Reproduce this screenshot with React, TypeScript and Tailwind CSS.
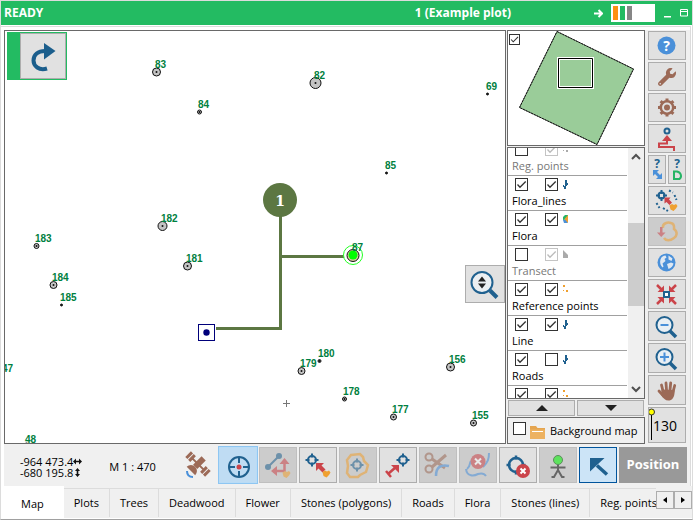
import React, { useState } from 'react';
import { FaWrench } from 'react-icons/fa';
import clsx from 'clsx';

const BLUE = '#20618f';
const SKY = '#4a90d9';
const RED = '#cb444a';
const ORANGE = '#efa030';
const BROWN = '#9c6a57';

type Plant = { id: string; x: number; y: number; r: number };

// Positions in map pixels
const plants: Plant[] = [
  { id: '83', x: 151, y: 41, r: 4 },
  { id: '84', x: 194, y: 81, r: 2 },
  { id: '82', x: 310, y: 52, r: 5.5 },
  { id: '69', x: 482, y: 63, r: 1 },
  { id: '85', x: 381, y: 142, r: 1 },
  { id: '182', x: 157, y: 195, r: 4.5 },
  { id: '181', x: 182, y: 235, r: 4 },
  { id: '183', x: 31, y: 215, r: 2.5 },
  { id: '184', x: 48, y: 254, r: 3.5 },
  { id: '185', x: 56, y: 274, r: 1 },
  { id: '180', x: 314, y: 330, r: 1.5 },
  { id: '179', x: 296, y: 340, r: 3.5 },
  { id: '178', x: 339, y: 368, r: 2 },
  { id: '177', x: 388, y: 386, r: 3 },
  { id: '156', x: 445, y: 336, r: 4 },
  { id: '155', x: 468, y: 392, r: 3 },
  { id: '48', x: 21, y: 416, r: 4 },
];

type Layer = { name: string; on: boolean; edit: boolean; kind: 'points' | 'line' | 'area' | 'transect'; muted?: boolean };

const initialLayers: Layer[] = [
  { name: 'Reg. points', on: false, edit: true, kind: 'points', muted: true },
  { name: 'Flora_lines', on: true, edit: true, kind: 'line' },
  { name: 'Flora', on: true, edit: true, kind: 'area' },
  { name: 'Transect', on: false, edit: true, kind: 'transect', muted: true },
  { name: 'Reference points', on: true, edit: true, kind: 'points' },
  { name: 'Line', on: true, edit: true, kind: 'line' },
  { name: 'Roads', on: true, edit: false, kind: 'line' },
  { name: 'Stones', on: true, edit: true, kind: 'points' },
];

const tabs = ['Map', 'Plots', 'Trees', 'Deadwood', 'Flower', 'Stones (polygons)', 'Roads', 'Flora', 'Stones (lines)', 'Reg. points'];

type CheckProps = { label: string; checked: boolean; onChange: () => void; muted?: boolean; small?: boolean };

const Check: React.FC<CheckProps> = ({ label, checked, onChange, muted, small }) => (
  <span className={clsx('relative block shrink-0', small ? 'size-[11px]' : 'size-[13px]')}>
    <input
      type="checkbox"
      aria-label={label}
      checked={checked}
      onChange={onChange}
      className={clsx('block size-full appearance-none border bg-white', muted && checked ? 'border-[#c4c4c4]' : 'border-[#333]')}
    />
    {checked && (
      <svg viewBox="0 0 13 13" className="pointer-events-none absolute inset-0 size-full" fill="none">
        <path d="M2.5 6.5 5 9.2 10.7 3.5" stroke={muted ? '#bbb' : '#333'} strokeWidth="1.3" />
      </svg>
    )}
  </span>
);

const Target = ({ x, y, r = 4.5, w = 2 }: { x: number; y: number; r?: number; w?: number }) => (
  <g stroke={BLUE} strokeWidth={w} fill="none">
    <circle cx={x} cy={y} r={r} />
    <path d={`M${x} ${y - r - 2.5}v4M${x} ${y + r - 1.5}v4M${x - r - 2.5} ${y}h4M${x + r - 1.5} ${y}h4`} />
  </g>
);

const Blob = ({ x, y }: { x: number; y: number }) => (
  <path d={`M${x - 3.5} ${y - 2}l2.5-1.5 2 1 2-1 1.5 2-1.5 2.5-2.5 2.5-3-1.5z`} fill={ORANGE} />
);

const LayerIcon = ({ kind, muted }: { kind: Layer['kind']; muted?: boolean }) => (
  <svg width="8" height="12" viewBox="0 0 8 12">
    {kind === 'points' && <path d="M1 2h2v2h-2zM4 7h2v2h-2zM1 7h1v1h-1z" fill={muted ? '#aaa' : ORANGE} />}
    {kind === 'line' && <path d="M3 2h2v3h1v2h-1v1h-1v3h-2v-2h-1v-2h1v1h1z" fill={BLUE} />}
    {kind === 'area' && (
      <>
        <path d="M1 4 3 2h3v4l-5 1z" fill="#25b465" />
        <path d="M1 7l3-1 2 4h-4z" fill={SKY} />
        <path d="M6 2v8L2.500 6z" fill={ORANGE} />
      </>
    )}
    {kind === 'transect' && <path d="M1 2 6 7v3h-5z" fill="#aaa" />}
  </svg>
);

type ToolProps = {
  label: string;
  children: React.ReactNode;
  disabled?: boolean;
  className?: string;
};

const Tool: React.FC<ToolProps> = ({ label, children, disabled, className = 'border-[#adadad] bg-[#e1e1e1]' }) => (
  <button
    type="button"
    aria-label={label}
    disabled={disabled}
    className={clsx('flex h-9 w-[38px] shrink-0 items-center justify-center border', disabled ? 'border-[#bfbfbf] bg-[#ccc]' : className)}
  >
    <svg width="36" height="34" viewBox="1 1 36 34" fill="none" className={clsx('shrink-0', disabled && 'opacity-55')}>
      {children}
    </svg>
  </button>
);

const SideTool: React.FC<{ label: string; children: React.ReactNode; disabled?: boolean; className?: string }> = ({
  label,
  children,
  disabled,
  className = 'h-[29px] w-full shrink-0',
}) => (
  <button
    type="button"
    aria-label={label}
    disabled={disabled}
    className={clsx(
      'flex items-center justify-center border',
      disabled ? 'border-[#bfbfbf] bg-[#ccc]' : 'border-[#adadad] bg-[#e1e1e1]',
      className
    )}
  >
    {children}
  </button>
);

const Drawing: React.FC<{ children: React.ReactNode; faded?: boolean }> = ({ children, faded }) => (
  <svg width="36" height="27" viewBox="1 1 36 27" fill="none" className={clsx('shrink-0', faded && 'opacity-55')}>
    {children}
  </svg>
);

const Magnifier = ({ sign }: { sign: string }) => (
  <Drawing>
    <circle cx="16.500" cy="13" r="8" stroke={BLUE} strokeWidth="2" fill="#e9eff4" />
    <path d="M22 19l6 6" stroke={BLUE} strokeWidth="3.500" />
    <path d={sign} stroke={SKY} strokeWidth="2" />
  </Drawing>
);

const TitleBar = () => (
  <header className="flex h-6 shrink-0 items-center bg-[#23bb62] pr-1 pl-[3px] text-xs font-bold text-white">
    <span>READY</span>
    <h1 className="mr-[83px] ml-auto">1 (Example plot)</h1>
    <svg width="9" height="9" viewBox="0 0 9 9" fill="none" stroke="#fff" strokeWidth="2">
      <path d="M0 4.500h8M4.500 1l3.500 3.500L4.500 8" />
    </svg>
    <div className="ml-2 flex h-[18px] w-11 gap-0.5 bg-white p-0.5">
      <span className="w-[5px] bg-[#ff9012]" />
      <span className="w-[5px] bg-[#23bb62]" />
      <span className="w-[5px] bg-[#868686]" />
    </div>
    <button type="button" aria-label="Minimize" className="ml-[9px]">
      <svg width="7" height="9" viewBox="0 0 7 9">
        <path d="M0 7h7v1.500H0z" fill="#fff" />
      </svg>
    </button>
    <button type="button" aria-label="Maximize" className="ml-[9px]">
      <svg width="8" height="8" viewBox="0 0 8 8" fill="none" stroke="#fff">
        <path d="M.5.5h7v6.500h-7zM0 2.500h8" />
      </svg>
    </button>
  </header>
);

const PlotMap = () => (
  <section className="relative min-w-0 flex-1 overflow-hidden border border-[#696969] bg-white">
    <svg className="absolute inset-0 size-full" role="img" aria-label="Plot map">
      {plants.map((p) => (
        <g key={p.id}>
          <circle cx={p.x + 0.5} cy={p.y} r={p.r} fill="#c4c4c4" stroke="#111" />
          <circle cx={p.x + 0.5} cy={p.y} r="1" fill="#111" />
        </g>
      ))}
      <path d="M275.500 180V297.500H211M275.500 225.500H341" fill="none" stroke="#5c7742" strokeWidth="3" />
      <circle cx="275" cy="169" r="17" fill="#5c7742" />
      <text x="275" y="175" textAnchor="middle" fill="#fff" className="font-['DejaVu_Serif',serif] text-sm font-bold">1</text>
      <rect x="193.500" y="293.500" width="16" height="16" fill="#fff" stroke="#00007a" />
      <circle cx="201.500" cy="301.500" r="3.200" fill="#00007a" />
      <circle cx="348" cy="224" r="9.500" fill="#fff" stroke="#2f2" />
      <circle cx="348" cy="224.500" r="6" fill="#d5cf9c" stroke="#111" />
      <circle cx="348" cy="224" r="4.500" fill="#0f0" />
      <g fill="#008040" className="font-['Liberation_Sans',sans-serif] text-[10px] font-bold">
        {plants.map((p) => (
          <text key={p.id} x={p.x - 1} y={p.y - 4}>{p.id}</text>
        ))}
        <text x="347" y="220">87</text>
        <text x="-3" y="341">47</text>
      </g>
      <path d="M278 372.500h7M281.500 369v7" stroke="#777" />
    </svg>
    <div className="absolute top-px left-0.5 flex bg-[#23bb62] p-px pl-[13px]">
      <button type="button" aria-label="Redo" className="size-[46px] border border-[#adadad] bg-[#e1e1e1]">
        <svg width="44" height="44" viewBox="0 0 44 44" fill="none">
          <path d="M26 34.500C18 37 12.500 32 12.500 26.500C12.500 20.500 17 17 24 17" stroke="#1b5e8c" strokeWidth="4" />
          <path d="M23 9l11.500 8L23 25.500z" fill="#1b5e8c" />
        </svg>
      </button>
    </div>
    <button
      type="button"
      aria-label="Zoom level"
      className="absolute top-[234px] right-0 h-[38px] w-10 border border-[#adadad] bg-[#e1e1e1]"
    >
      <svg width="38" height="36" viewBox="0 0 38 36" fill="none">
        <circle cx="16" cy="16.500" r="10.500" stroke={BLUE} strokeWidth="2" fill="#ebeff2" />
        <path d="M24 24.500l7 7" stroke={BLUE} strokeWidth="4" />
        <path d="M16 10.500l4 5h-8zM12 17.500h8l-4 5z" fill="#222" />
      </svg>
    </button>
  </section>
);

const LayerPanel = () => {
  const [layers, setLayers] = useState(initialLayers);
  const [overview, setOverview] = useState(true);
  const [background, setBackground] = useState(false);

  const toggle = (index: number, key: 'on' | 'edit') => {
    setLayers((prev) => prev.map((l, i) => (i === index ? { ...l, [key]: !l[key] } : l)));
  };

  return (
    <aside className="ml-px flex w-[138px] shrink-0 flex-col">
      <div className="relative h-[116px] shrink-0 border border-[#696969] bg-white">
        <svg width="136" height="114" viewBox="0 0 136 114">
          <path d="M49 .5l76.500 37.500L89 113.500 11.500 76.500z" fill="#9acc99" stroke="#111" strokeDasharray="2 1" />
          <path d="M49 .5l76.500 37.500L89 113.500 11.500 76.500z" fill="none" stroke="#111" strokeWidth=".6" />
          <path d="M50.500 27.500h34v29h-34z" fill="none" stroke="#fff" strokeWidth="3" />
          <path d="M50.500 27.500h34v29h-34z" fill="none" stroke="#000" />
        </svg>
        <div className="absolute top-[3px] left-px">
          <Check small label="Overview" checked={overview} onChange={() => setOverview(!overview)} />
        </div>
      </div>

      <div className="mt-px flex min-h-0 flex-1 overflow-hidden border border-[#696969] bg-white">
        <ul className="-mt-[7px] min-w-0 flex-1 pr-px">
          {layers.map((layer, i) => (
            <li key={layer.name} className="h-[35px] border-b border-[#a0a0a0] pt-0.5 pl-1">
              <div className="flex pl-[3px]">
                <Check label={`Show ${layer.name}`} checked={layer.on} onChange={() => toggle(i, 'on')} />
                <span className="w-[17px]" />
                <Check label={`Edit ${layer.name}`} muted={layer.muted} checked={layer.edit} onChange={() => toggle(i, 'edit')} />
                <span className="w-1" />
                <LayerIcon kind={layer.kind} muted={layer.muted} />
              </div>
              <p className={clsx('mt-px text-[11px]/[18px] whitespace-nowrap', layer.muted && 'text-[#777]')}>{layer.name}</p>
            </li>
          ))}
        </ul>
        <div className="flex w-4 shrink-0 flex-col bg-[#f0f0f0]">
          <svg width="16" height="17" viewBox="0 0 16 17" fill="none" stroke="#505050" strokeWidth="2">
            <path d="M4 11l4-4 4 4" />
          </svg>
          <div className="flex-[58]" />
          <div className="flex-[83] bg-[#cdcdcd]" />
          <div className="flex-[75]" />
          <svg width="16" height="17" viewBox="0 0 16 17" fill="none" stroke="#505050" strokeWidth="2">
            <path d="M4 6l4 4 4-4" />
          </svg>
        </div>
      </div>

      <div className="mx-px mt-px flex h-4 shrink-0 gap-0.5">
        <button type="button" aria-label="Move up" className="flex flex-1 items-center justify-center border border-[#adadad] bg-[#e1e1e1]">
          <svg width="12" height="6" viewBox="0 0 12 6"><path d="M6 0l6 6H0z" fill="#222" /></svg>
        </button>
        <button type="button" aria-label="Move down" className="flex flex-1 items-center justify-center border border-[#adadad] bg-[#e1e1e1]">
          <svg width="12" height="6" viewBox="0 0 12 6"><path d="M0 0h12L6 6z" fill="#222" /></svg>
        </button>
      </div>

      <div className="mt-px flex h-[27px] shrink-0 items-center border border-[#696969] bg-[#f0f0f0] pl-[5px] text-[11px]">
        <div className="mb-[5px]">
          <Check label="Background map" checked={background} onChange={() => setBackground(!background)} />
        </div>
        <svg width="16" height="14" viewBox="0 0 16 14" className="mt-0.5 ml-1 shrink-0">
          <path d="M0 1h6l1.500 2H15v11H0z" fill="#e5a550" />
          <path d="M0 4.500h15V14H0z" fill="#edb261" />
          <path d="M2 6.500h11" stroke="#fff" />
        </svg>
        <span className="mt-0.5 ml-1 whitespace-nowrap">Background map</span>
      </div>
    </aside>
  );
};

const SideTools = () => (
  <nav className="ml-[3px] flex w-[38px] shrink-0 flex-col gap-0.5 pt-px">
    <SideTool label="Help">
      <Drawing>
        <circle cx="18.500" cy="14.500" r="9" fill={SKY} />
        <text x="18.500" y="19.500" textAnchor="middle" fill="#fff" className="text-sm font-bold">?</text>
      </Drawing>
    </SideTool>
    <SideTool label="Settings">
      <FaWrench className="size-[18px] text-[#9c6a57]" />
    </SideTool>
    <SideTool label="Options">
      <Drawing>
        <circle cx="19" cy="14.500" r="6.200" stroke={BROWN} strokeWidth="2.500" />
        <path
          d="M19 5.500v3M19 20.500v3M10 14.500h3M25 14.500h3M12.600 8.100l2.200 2.200M23.200 18.700l2.200 2.200M12.600 20.900l2.200-2.200M23.200 10.300l2.200-2.200"
          stroke={BROWN}
          strokeWidth="3"
        />
        <circle cx="19" cy="14.500" r="3" fill={BROWN} />
      </Drawing>
    </SideTool>
    <SideTool label="Traverse">
      <Drawing>
        <circle cx="19" cy="7" r="2.500" stroke={BLUE} strokeWidth="2" />
        <path d="M19 11l5 6H14z" fill={RED} />
        <path d="M19 16v3.500h-8v3.500h15v4" stroke={RED} strokeWidth="2" />
      </Drawing>
    </SideTool>
    <div className="flex gap-0.5">
      <SideTool label="Query distance" className="h-[29px] min-w-0 flex-1">
        <svg width="16" height="27" viewBox="0 0 16 27" className="shrink-0">
          <text x="8" y="12" textAnchor="middle" fill={BLUE} className="text-xs font-bold">?</text>
          <path d="M4 14h6l-2 2 3 3 2-2v6h-6l2-2-3-3-2 2z" fill={SKY} />
        </svg>
      </SideTool>
      <SideTool label="Query diameter" className="h-[29px] min-w-0 flex-1">
        <svg width="16" height="27" viewBox="0 0 16 27" className="shrink-0" fill="none">
          <text x="8" y="12" textAnchor="middle" fill={BLUE} className="text-xs font-bold">?</text>
          <path d="M5 15.500h3c4.500 1 5 5.500 2.500 7.500H5z" stroke="#25b465" strokeWidth="2" />
        </svg>
      </SideTool>
    </div>
    <SideTool label="Measure points">
      <Drawing>
        <Target x={13.5} y={9.5} r={3} />
        <path d="M21 4.500l4 2M26.500 9l2 5M8.500 17l3 5M15 22l5 3" stroke={BLUE} strokeWidth="2" strokeDasharray="2 2" />
        <path d="M16.500 11.500h6l-1.500 2 3 3-2.500 2.500-3-3-2 1.500z" fill={RED} />
        <Blob x={25} y={21.5} />
      </Drawing>
    </SideTool>
    <SideTool label="Close polygon" disabled>
      <Drawing faded>
        <path d="M15 11c-1-5 5-6 8-5 4 1 3 4 3 6 4 3 3 7 0 9-4 3-8 3-10 0" stroke={ORANGE} strokeWidth="2.500" />
        <path d="M12 10h2.500v5.500h3L13.200 20 9 15.500h3z" fill={RED} />
      </Drawing>
    </SideTool>
    <SideTool label="World view">
      <Drawing>
        <circle cx="18.500" cy="14.500" r="9" fill={SKY} />
        <path
          d="M12.500 11.500c1-3 3-4 5-4l1 2-2 1.500 1 2-3 2.500 1 3-1 1c-2-2-3-5-2-8zM20.500 7.500l4 3-1 2.500-3-1.500zM19 16l4-1.500 2.500 1c-.5 2.500-2 4.500-5 5.500z"
          fill="#dfe8f2"
        />
      </Drawing>
    </SideTool>
    <SideTool label="Zoom to extent" className="h-[30px] w-full shrink-0">
      <Drawing>
        <path d="M9 5l6 6M28 5l-6 6M9 24l6-6M28 24l-6-6" stroke={RED} strokeWidth="2.500" />
        <path d="M16 12H9.500L16 5.500zM21 12V5.500l6.500 6.500zM16 17v6.500L9.500 17zM21 17h6.500L21 23.500z" fill={RED} />
        <path d="M16 12h5v5h-5z" fill="#fff" stroke={BLUE} strokeWidth="2" />
      </Drawing>
    </SideTool>
    <SideTool label="Zoom out" className="h-[30px] w-full shrink-0">
      <Magnifier sign="M12.500 13h8" />
    </SideTool>
    <SideTool label="Zoom in" className="h-[30px] w-full shrink-0">
      <Magnifier sign="M12 13h9M16.500 8.500v9" />
    </SideTool>
    <SideTool label="Pan" className="h-[30px] w-full shrink-0">
      <Drawing>
        <path d="M15 15L13.500 9M18.500 14l-.5-7M22 14l.7-7M25 16l1.700-6.500M15.500 20l-4.500-5" stroke={BROWN} strokeWidth="2.800" strokeLinecap="round" />
        <path d="M13.500 13.500l13 .5c.5 5-1 9.500-5 10.500-4 .5-6-2-8-5z" fill={BROWN} />
      </Drawing>
    </SideTool>
    <SideTool label="Height 130" className="h-9 w-full shrink-0">
      <svg width="36" height="34" viewBox="0 0 36 34" className="shrink-0">
        <path d="M2.500 6v26" stroke="#000" />
        <circle cx="2.500" cy="4" r="3" fill="#ff0" stroke="#333" />
        <text x="4" y="23" fill="#000" className="text-sm">130</text>
      </svg>
    </SideTool>
  </nav>
);

const Toolbar = () => (
  <div className="flex h-[42px] shrink-0 items-start gap-0.5 bg-[#f0f0f0] pt-[3px] pl-4 text-[11px]">
    <div className="pt-[9px] text-[11px]/[11px] whitespace-nowrap">
      <p className="flex items-center">
        -964 473.4
        <svg width="9" height="7" viewBox="0 0 9 7"><path d="M0 3.500L3 .5v2.200h3v-2.200l3 3-3 3v-2.200H3v2.200z" fill="#111" /></svg>
      </p>
      <p className="flex items-center">
        -680 195.8
        <svg width="9" height="9" viewBox="0 0 9 9"><path d="M4.500 0l2.500 3h-1.700v3h1.700l-2.500 3-2.500-3h1.700V3h-1.700z" fill="#111" /></svg>
      </p>
    </div>
    <p className="ml-[25px] pt-3 whitespace-nowrap">M 1 : 470</p>
    <div className="ml-auto flex gap-0.5">
      <Tool label="GPS" className="border-transparent">
        <g transform="translate(19 17) rotate(45)" fill={BROWN}>
          <path d="M-14-4h3v8h-3zM-10-4h3v8h-3zM7-4h3v8H7zM11-4h3v8h-3zM-8-1H8v2H-8z" />
          <path d="M-3-8h6v12h-6z" />
          <path d="M-6 10a6 6 0 0 1 12 0z" />
        </g>
        <path d="M8 24c0 4 2 6 6 6" stroke={SKY} strokeWidth="2" />
      </Tool>
      <Tool label="Centre" className="border-[#b9dcf6] bg-[#bfdcf3] ring-1 ring-[#8ec6f2]">
        <circle cx="20" cy="20" r="10" stroke={BLUE} strokeWidth="2" />
        <path d="M20 10v6M20 24v6M10 20h6M24 20h6" stroke={BLUE} strokeWidth="2" />
        <circle cx="20" cy="20" r="2.500" fill={RED} />
      </Tool>
      <Tool label="Traverse point" disabled>
        <path d="M9 20L20 9" stroke={BLUE} strokeWidth="2" />
        <circle cx="9" cy="20" r="3" fill={BLUE} />
        <circle cx="20" cy="9" r="3" fill={BLUE} />
        <path d="M25.500 16v8H17" stroke={RED} strokeWidth="2.500" />
        <path d="M25.500 11l5 6h-10zM12 24l6-5v10z" fill={RED} />
        <Blob x={27} y={27.5} />
      </Tool>
      <Tool label="Move point">
        <Target x={13} y={13} r={4} />
        <path d="M17 16h8l-2.500 2.500 4 4-3 3-4-4-2.500 2.500z" fill={RED} />
        <Blob x={27} y={27} />
      </Tool>
      <Tool label="Polygon centre" disabled>
        <path d="M12 8l9-1 3 3 1 4 4 4-2 7-6 3-2 2h-8l-3-4 1-7-1-6z" stroke={ORANGE} strokeWidth="2.500" />
        <Target x={18} y={18} r={4} />
      </Tool>
      <Tool label="Measure distance">
        <Target x={24} y={13} r={4} />
        <path d="M9 27l8-7M7 24l5 6" stroke={RED} strokeWidth="2.500" />
        <path d="M12 18h8v8z" fill={RED} />
      </Tool>
      <Tool label="Cut line" disabled>
        <g stroke={BROWN} strokeWidth="2">
          <circle cx="10" cy="10" r="3.500" />
          <circle cx="10" cy="22" r="3.500" />
          <path d="M13 12l13 9M13 20L27 8" strokeWidth="3" />
        </g>
        <path d="M17 29c0-9 5-12 13-10" stroke={SKY} strokeWidth="2.500" />
      </Tool>
      <Tool label="Delete line" disabled>
        <path d="M7 22c1 8 8 7 12 5 3-1 6-1 8 2M8 22c4-3 2-6 4-8M30 6c0 6-1 9-6 14" stroke={SKY} strokeWidth="2" />
        <circle cx="19" cy="14.500" r="7.500" fill={RED} />
        <path d="M16 11.500l6 6M22 11.500l-6 6" stroke="#fff" strokeWidth="2" />
      </Tool>
      <Tool label="Delete point">
        <Target x={17} y={18} r={7} w={2.5} />
        <circle cx="24" cy="24" r="7" fill={RED} />
        <path d="M21.500 21.500l5 5M26.500 21.500l-5 5" stroke="#fff" strokeWidth="2" />
      </Tool>
      <Tool label="Person" className="border-[#bfbfbf] bg-[#ccc]">
        <path d="M19 17v7M11.500 20.500h15M19 23l-4 7h-2.500M19 23l4 7h2.500" stroke="#666" strokeWidth="2" />
        <circle cx="19" cy="13" r="4.500" fill="#5de35d" stroke="#5d8d5d" />
      </Tool>
      <Tool label="Select" className="border-[#00549c] bg-[#cce4f7]">
        <path d="M28 27.500l-10-9" stroke={BLUE} strokeWidth="3.500" />
        <path d="M11 11h14.500L11 24.500z" fill={BLUE} />
      </Tool>
      <button type="button" className="h-9 w-[68px] bg-[#999] text-[13px] font-bold text-white">Position</button>
    </div>
  </div>
);

const TabBar = () => {
  const [active, setActive] = useState('Map');

  return (
    <nav className="relative flex h-8 shrink-0 overflow-hidden bg-[#f0f0f0]">
      {tabs.map((tab) => (
        <button
          key={tab}
          type="button"
          onClick={() => setActive(tab)}
          className={clsx(
            'shrink-0 text-[11px] whitespace-nowrap',
            tab === active ? 'bg-white px-5 pt-1' : 'mt-0.5 mb-px border-t border-r border-[#dcdcdc] px-2.5'
          )}
        >
          {tab}
        </button>
      ))}
      <div className="absolute top-0 right-0 flex h-full w-9 items-center bg-[#f0f0f0] pb-[5px]">
        <button type="button" aria-label="Previous tabs" className="flex h-[18px] w-[18px] items-center justify-center border border-[#adadad] bg-[#f0f0f0]">
          <svg width="4" height="6" viewBox="0 0 4 6"><path d="M4 0v6L0 3z" /></svg>
        </button>
        <button type="button" aria-label="Next tabs" className="flex h-[18px] w-[18px] items-center justify-center border border-[#adadad] bg-[#f0f0f0]">
          <svg width="4" height="6" viewBox="0 0 4 6"><path d="M0 0v6l4-3z" /></svg>
        </button>
      </div>
    </nav>
  );
};

const App: React.FC = () => (
  <div className="flex h-screen flex-col border border-b-[#a0a0a0] border-[#dcdcdc] bg-white pb-px font-['Open_Sans','Noto_Sans',sans-serif] text-black">
    <TitleBar />
    <main className="mt-px mr-px flex min-h-0 flex-1 flex-col border-t border-r border-[#dcdcdc] pt-[3px] pl-[3px]">
      <div className="flex min-h-0 flex-1 bg-[#f0f0f0] pr-1">
        <PlotMap />
        <LayerPanel />
        <SideTools />
      </div>
      <div className="bg-[#f0f0f0] pr-[3px]">
        <Toolbar />
      </div>
    </main>
    <TabBar />
  </div>
);

export default App;
